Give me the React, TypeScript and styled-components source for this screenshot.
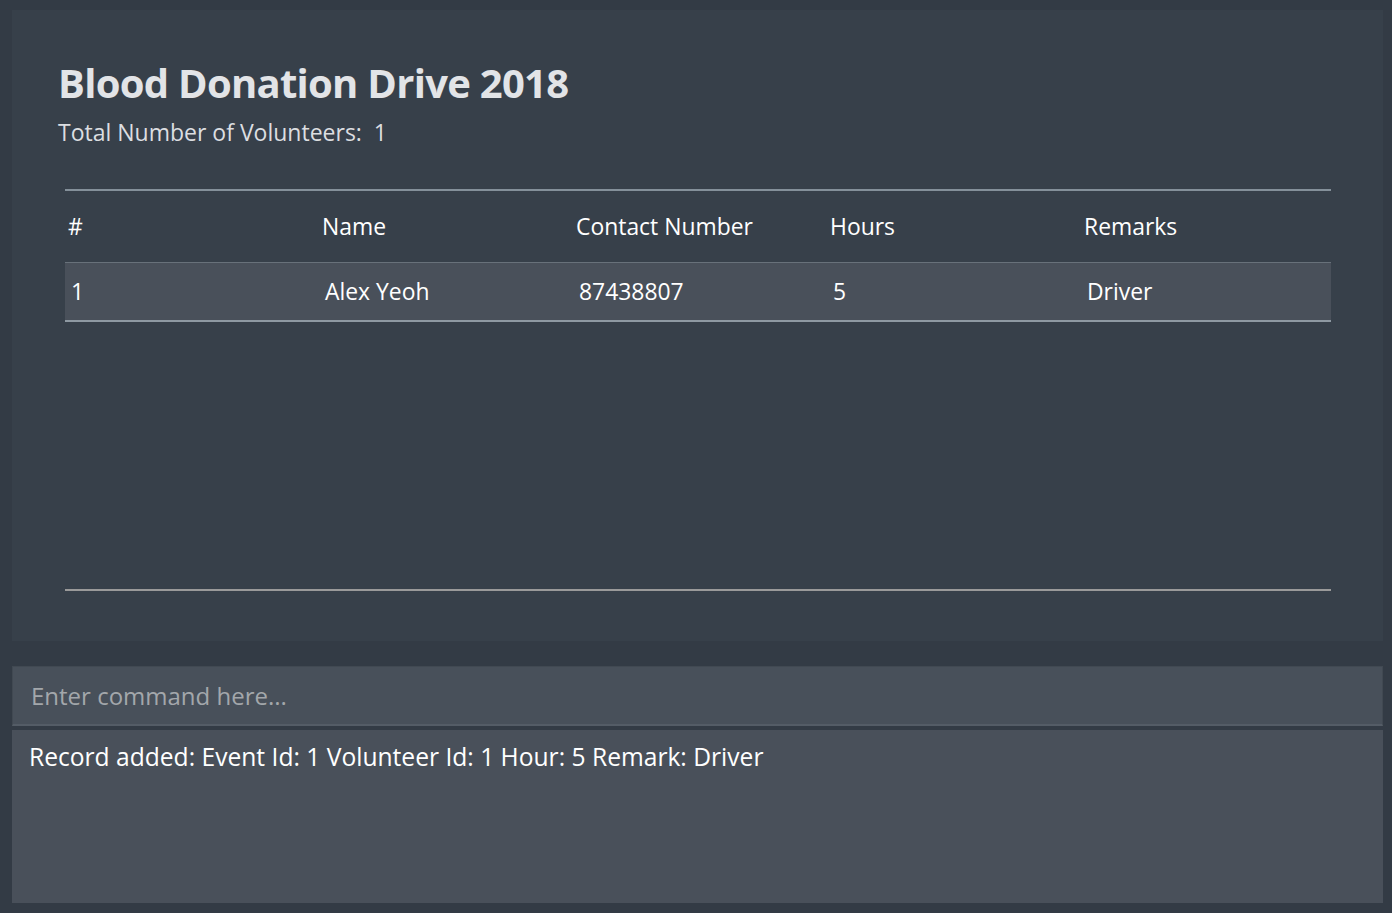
import React from "react";
import styled, { createGlobalStyle } from "styled-components";

const Global = createGlobalStyle`
  html, body { margin: 0; padding: 0; background: #333b45; }
  body { font-family: "Open Sans", "Noto Sans", sans-serif; }
`;

const Page = styled.div`
  width: 1392px;
  height: 913px;
  box-sizing: border-box;
  padding: 10px 9px 10px 12px;
  display: flex;
  flex-direction: column;
  background: #333b45;
`;

const Panel = styled.section`
  height: 631px;
  flex: none;
  box-sizing: border-box;
  background: #37404a;
  padding: 53px 52px 0 46px;
  display: flex;
  flex-direction: column;
`;

const Title = styled.h1`
  margin: 0;
  font-size: 40px;
  font-weight: 700;
  color: #e2e4e7;
  line-height: 40px;
  letter-spacing: -0.72px;
`;

const Subtitle = styled.div`
  margin-top: 14px;
  font-size: 23px;
  color: #dcdee1;
  line-height: 30px;
`;

const Table = styled.div`
  margin: 42px 0 0 7px;
  height: 402px;
  display: flex;
  flex-direction: column;
  border-top: 2px solid #84909a;
  border-bottom: 2px solid #9a9a9a;
  box-sizing: border-box;
`;

const Row = styled.div<{ $body?: boolean }>`
  display: grid;
  grid-template-columns: repeat(4, 254px) 1fr;
  height: ${(p) => (p.$body ? "60px" : "71px")};
  align-items: center;
  background: ${(p) => (p.$body ? "#49505a" : "transparent")};
  border-top: ${(p) => (p.$body ? "1px solid #68717a" : "none")};
  border-bottom: ${(p) => (p.$body ? "2px solid #8e99a2" : "none")};
  box-sizing: border-box;
`;

const Cell = styled.div<{ $body?: boolean }>`
  padding-left: ${(p) => (p.$body ? "6px" : "3px")};
  font-size: 22.9px;
  color: #ffffff;
`;

const CommandBox = styled.div`
  margin-top: 25px;
  height: 60px;
  flex: none;
  box-sizing: border-box;
  background: #48505a;
  border: 1px solid #414952;
  border-bottom: 2px solid #545c66;
  padding-left: 18px;
  display: flex;
  align-items: center;
  font-size: 24px;
  color: #a3a7ab;
`;

const Result = styled.div`
  margin-top: 4px;
  flex: 1;
  background: #49505a;
  padding: 10px 17px;
  font-size: 24.6px;
  color: #ffffff;
  line-height: 34px;
`;

const headers = ["#", "Name", "Contact Number", "Hours", "Remarks"];
const rows = [["1", "Alex Yeoh", "87438807", "5", "Driver"]];

export default function App() {
  return (
    <>
      <Global />
      <Page>
        <Panel>
          <Title>Blood Donation Drive 2018</Title>
          <Subtitle>Total Number of Volunteers:&nbsp; 1</Subtitle>
          <Table>
            <Row>
              {headers.map((h) => (
                <Cell key={h}>{h}</Cell>
              ))}
            </Row>
            {rows.map((r, i) => (
              <Row $body key={i}>
                {r.map((c, j) => (
                  <Cell $body key={j}>
                    {c}
                  </Cell>
                ))}
              </Row>
            ))}
          </Table>
        </Panel>
        <CommandBox>Enter command here...</CommandBox>
        <Result>Record added: Event Id: 1 Volunteer Id: 1 Hour: 5 Remark: Driver</Result>
      </Page>
    </>
  );
}
